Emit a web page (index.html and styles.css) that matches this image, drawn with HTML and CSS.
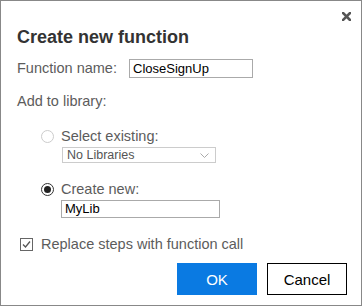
FILE: index.html
```html
<!DOCTYPE html>
<html lang="en">

<head>
    <meta charset="UTF-8">
    <title>Create new function</title>
    <link rel="stylesheet" href="styles.css">
</head>

<body>

    <div class="dialog">
        <div class="close-row">
            <svg class="close" width="9" height="9" viewBox="0 0 9 9">
                <path d="M1 1 L8 8 M8 1 L1 8" stroke="#555" stroke-width="2.6" stroke-linecap="square" />
            </svg>
        </div>

        <h1 class="title">Create new function</h1>

        <div class="name-row">
            <label class="label name-label">Function name:</label>
            <div class="textbox name-box">CloseSignUp</div>
        </div>

        <div class="label add-label">Add to library:</div>

        <div class="options">
            <div class="option">
                <span class="radio disabled"></span>
                <span class="label">Select existing:</span>
            </div>
            <div class="select">
                <span>No Libraries</span>
                <svg width="9" height="5" viewBox="0 0 9 5">
                    <polyline points="0.5,0.5 4.5,4.5 8.5,0.5" fill="none" stroke="#aaa" stroke-width="1" />
                </svg>
            </div>

            <div class="option second">
                <span class="radio checked"></span>
                <span class="label">Create new:</span>
            </div>
            <div class="textbox lib-box">MyLib</div>
        </div>

        <div class="check-row">
            <span class="checkbox">
                <svg width="9" height="9" viewBox="0 0 9 9">
                    <polyline points="1,4.5 3.5,7 8,1.5" fill="none" stroke="#555" stroke-width="1.3" />
                </svg>
            </span>
            <span class="label">Replace steps with function call</span>
        </div>

        <div class="buttons">
            <button class="btn ok">OK</button>
            <button class="btn cancel">Cancel</button>
        </div>
    </div>

</body>

</html>
```

FILE: styles.css
```css
* {
    padding: 0;
    margin: 0;
    box-sizing: border-box;
}

body {
    font-family: "Liberation Sans", Arial, sans-serif;
    background-color: #fff;
}

.dialog {
    width: 362px;
    height: 306px;
    border: 1px solid #888;
    padding: 0 14px 0 16px;
    display: flex;
    flex-direction: column;
}

.close-row {
    height: 26px;
    display: flex;
    justify-content: flex-end;
    align-items: flex-start;
    padding-top: 11px;
    margin-right: -4px;
}

.title {
    font-size: 18px;
    line-height: 21px;
    font-weight: bold;
    color: #333;
}

.label {
    font-size: 14.5px;
    line-height: 17px;
    color: #5c5c5c;
}

.name-row {
    display: flex;
    align-items: center;
    margin-top: 11px;
}

.name-label {
    width: 112px;
}

.textbox {
    height: 19px;
    border: 1px solid #aaa;
    font-size: 13px;
    line-height: 17px;
    padding-left: 3px;
    color: #000;
}

.name-box {
    width: 124px;
}

.add-label {
    margin-top: 15px;
}

.options {
    padding-left: 24px;
    margin-top: 18px;
}

.option {
    display: flex;
    align-items: center;
    gap: 7px;
}

.option.second {
    margin-top: 18px;
}

.radio {
    width: 13px;
    height: 13px;
    border-radius: 50%;
    border: 1px solid #333;
    display: flex;
    align-items: center;
    justify-content: center;
}

.radio.disabled {
    border-color: #ccc;
}

.radio.checked::after {
    content: "";
    width: 7px;
    height: 7px;
    border-radius: 50%;
    background-color: #222;
}

.select {
    width: 154px;
    height: 16px;
    margin: 2px 0 0 21px;
    border: 1px solid #ccc;
    display: flex;
    align-items: center;
    justify-content: space-between;
    padding: 0 6px 0 4px;
    font-size: 12.5px;
    color: #555;
}

.lib-box {
    width: 159px;
    height: 18px;
    line-height: 16px;
    margin: 2px 0 0 20px;
}

.check-row {
    display: flex;
    align-items: center;
    gap: 8px;
    margin: 18px 0 0 3px;
}

.checkbox {
    width: 13px;
    height: 13px;
    border: 1px solid #666;
    display: flex;
    align-items: center;
    justify-content: center;
}

.buttons {
    display: flex;
    justify-content: flex-end;
    gap: 10px;
    margin-top: 10px;
}

.btn {
    width: 80px;
    height: 32px;
    font-family: "Liberation Sans", Arial, sans-serif;
    font-size: 15px;
    border: 1px solid #000;
    background-color: #fff;
    color: #000;
}

.btn.ok {
    background-color: #0a7ae2;
    border-color: #0a7ae2;
    color: #fff;
}
```
